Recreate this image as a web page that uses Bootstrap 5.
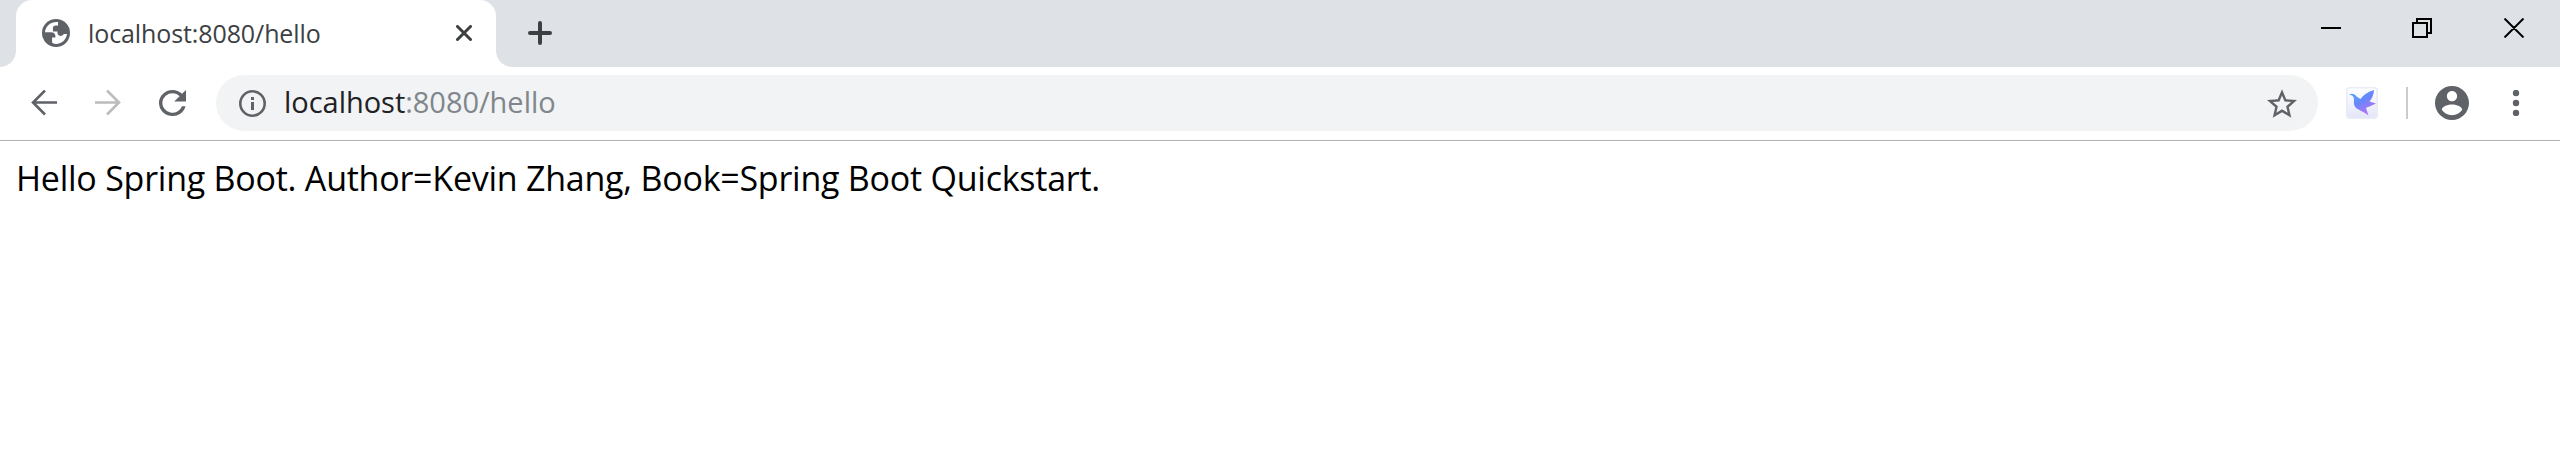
<!DOCTYPE html>
<html lang="en">
<head>
<meta charset="utf-8">
<title>localhost:8080/hello</title>
<link href="https://cdn.jsdelivr.net/npm/bootstrap@5.3.0/dist/css/bootstrap.min.css" rel="stylesheet">
<style>
body{font-family:"Open Sans","Noto Sans",sans-serif;background:#fff;color:#000;overflow:hidden}
svg{display:block;flex:none}
.tabstrip{height:67px;background:#dee1e6;padding-left:16px}
.tab-active{width:480px;background:#fff;border-radius:16px 16px 0 0;padding:0 24px 1px 26px;position:relative}
.tab-active::before,.tab-active::after{content:"";position:absolute;bottom:0;width:16px;height:16px}
.tab-active::before{left:-16px;background:radial-gradient(circle at 0 0,transparent 15.5px,#fff 16.2px)}
.tab-active::after{right:-16px;background:radial-gradient(circle at 100% 0,transparent 15.5px,#fff 16.2px)}
.tab-title{font-size:25px;line-height:32px;color:#3c4043;margin-left:18px;letter-spacing:-.1px}
.new-tab{margin:21px 0 0 32px}
.win-controls{margin-top:18px}
.toolbar-row{height:74px;border-bottom:1px solid #b0b0b0;padding:0 32px 1px 31px}
.omnibox{height:56px;background:#f1f3f4;border-radius:28px;width:2102px;padding:0 21px 0 23px;margin:0 28px 0 30px}
.gap-arrows{margin-left:38px}
.url{font-size:29px;line-height:40px;color:#202124;margin-left:18px;padding-bottom:2px;letter-spacing:-.03px}
.url span{color:#80868b}
.divider{width:2px;height:32px;background:#ccc;margin:0 27px 0 28px}
.page{padding:13px 16px;font-size:34px;line-height:48px;letter-spacing:-.24px}
</style>
</head>
<body>
<header>
<div class="tabstrip d-flex">
 <div class="tab-active d-flex align-items-center flex-shrink-0">
  <svg width="28" height="28" viewBox="0 0 28 28"><circle cx="14" cy="14" r="14" fill="#5f6368"/><path d="M16 3.100C9.500 2.300 3.700 6.500 2.900 13.200H9c2.700 0 4.400 1.400 4.400 3.900v1.300h-3.300v5.300c1.500.9 3.200 1.300 4.900 1.200 5.300-.4 9.300-4.500 10-9.800h-3.200c-.8 1.300-1.800 1.800-3.300 1.800-1.900 0-3-1.200-3-2.800V12.400h-4.600V9.200c0-1.900 1-2.800 2.900-2.800h2.200z" fill="#fff"/></svg>
  <div class="tab-title">localhost:8080/hello</div>
  <svg class="ms-auto" width="16" height="16" viewBox="0 0 16 16" stroke="#3c4043" stroke-width="3" stroke-linecap="round"><path d="M1.500 1.500l13 13M14.500 1.500l-13 13"/></svg>
 </div>
 <svg class="new-tab" width="24" height="24" viewBox="0 0 24 24" stroke="#3c4043" stroke-width="4" stroke-linecap="round"><path d="M2 12h20M12 2v20"/></svg>
 <div class="d-flex ms-auto pe-4">
  <svg class="win-controls" width="215" height="20" viewBox="0 0 215 20" fill="none" stroke="#000" stroke-width="2"><path d="M0 10h20M92 5h14v14H92zM96 5V1h14v14h-4M183.500.500l19 19M202.500.500l-19 19"/></svg>
 </div>
</div>
<div class="toolbar-row d-flex align-items-center">
 <svg width="26" height="26" viewBox="0 0 26 26" fill="none" stroke="#5f6368" stroke-width="2.600"><path d="M26 12.500H2M14 .5L2 12.500l12 12"/></svg>
 <svg class="gap-arrows" width="26" height="26" viewBox="0 0 26 26" fill="none" stroke="#babcbe" stroke-width="2.600"><path d="M0 12.500h24M12 .5l12 12-12 12"/></svg>
 <svg class="gap-arrows" width="27" height="26" viewBox="4 4 16 16" fill="#5f6368" preserveAspectRatio="none"><path d="M17.650 6.350A7.960 7.960 0 0 0 12 4a8 8 0 1 0 7.730 10h-2.080A6 6 0 1 1 12 6c1.660 0 3.140.69 4.220 1.780L13 11h7V4z"/></svg>
 <div class="omnibox d-flex align-items-center flex-shrink-0">
  <svg width="27" height="27" viewBox="0 0 27 27"><circle cx="13.500" cy="13.500" r="12.200" fill="none" stroke="#5f6368" stroke-width="2.600"/><path d="M12 7h3v3h-3zM12 12h3v8h-3z" fill="#5f6368"/></svg>
  <div class="url">localhost<span>:8080/hello</span></div>
  <svg class="ms-auto" width="30" height="29" viewBox="2 2 20 19" fill="#5f6368"><path d="M22 9.240l-7.190-.62L12 2 9.190 8.630 2 9.240l5.460 4.730L5.820 21 12 17.270 18.180 21l-1.630-7.030zM12 15.400l-3.760 2.270 1-4.280-3.320-2.880 4.380-.38L12 6.100l1.710 4.040 4.380.38-3.320 2.880 1 4.280z"/></svg>
 </div>
 <svg width="32" height="32" viewBox="0 0 32 32">
  <defs>
   <linearGradient id="tile" x2="0" y2="1"><stop stop-color="#fff"/><stop offset="1" stop-color="#e3e6f8"/></linearGradient>
   <linearGradient id="bird" x1="0" y1="0" x2=".7" y2="1"><stop stop-color="#51b5f5"/><stop offset=".5" stop-color="#6687fb"/><stop offset="1" stop-color="#bd72f5"/></linearGradient>
  </defs>
  <rect x=".8" y=".8" width="30.400" height="30.400" rx="3" fill="url(#tile)" stroke="#e9ecf6" stroke-width="1.600"/>
  <path d="M3 7.500c3-1.300 5.800-.7 7.500 2l4 2.500c3-4.500 7.500-7.500 13.500-9-.2 4.500-1.800 8.500-4.500 11.500l6.500 2-6.500 3c-2 .8-3 1-3.500 1.500l2.500 7.500c-4-3-7-4.500-10-6-4-2-5-5-4.500-9.500.2-3-1.500-5-5-5.500z" fill="url(#bird)"/>
 </svg>
 <div class="divider"></div>
 <svg width="34" height="34" viewBox="2 2 20 20" fill="#5f6368"><path d="M12 2C6.480 2 2 6.480 2 12s4.480 10 10 10 10-4.480 10-10S17.520 2 12 2zm0 3c1.660 0 3 1.340 3 3s-1.340 3-3 3-3-1.340-3-3 1.340-3 3-3zm0 14.200c-2.500 0-4.710-1.280-6-3.220.03-1.990 4-3.080 6-3.080 1.990 0 5.970 1.090 6 3.080-1.290 1.940-3.500 3.220-6 3.220z"/></svg>
 <svg class="ms-auto me-2" width="8" height="26" viewBox="0 0 8 26" fill="#5f6368"><circle cx="4" cy="3" r="3.200"/><circle cx="4" cy="13" r="3.200"/><circle cx="4" cy="23" r="3.200"/></svg>
</div>
</header>
<main class="page">Hello Spring Boot. Author=Kevin Zhang, Book=Spring Boot Quickstart.</main>
<script src="https://cdn.jsdelivr.net/npm/bootstrap@5.3.0/dist/js/bootstrap.bundle.min.js"></script>
</body>
</html>
